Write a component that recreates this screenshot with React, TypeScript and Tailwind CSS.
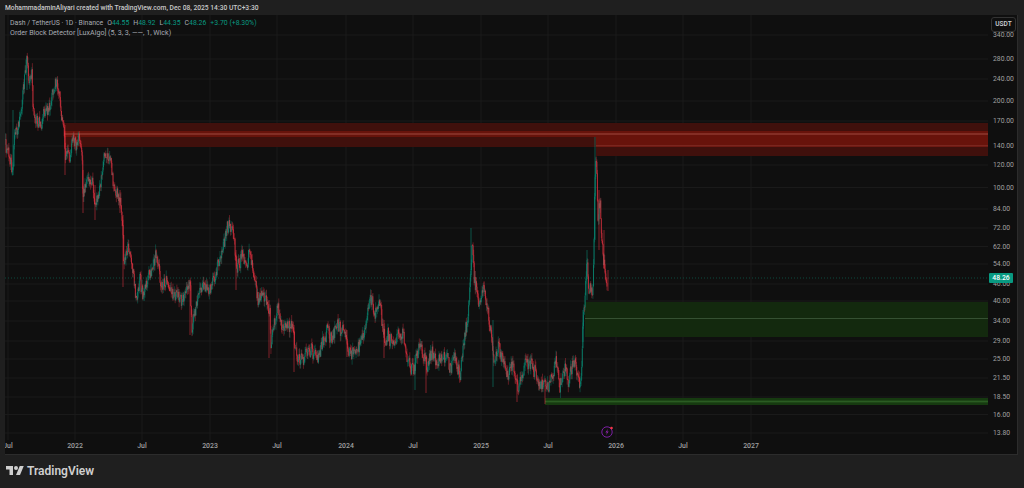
const UP = '#089981';
const DOWN = '#f23645';

// price path traced from the chart, in page pixels
const pricePath: [number, number][] = [
  [5, 140], [6, 147], [13, 170], [14, 140], [20, 117], [23, 93], [27, 63], [29, 83], [32, 73], [33, 107], [38, 130],
  [43, 113], [50, 103], [57, 80], [60, 107], [64, 127], [65, 160], [70, 157], [73, 137], [76, 147], [78, 137],
  [82, 157], [83, 197], [88, 173], [92, 183], [95, 203], [100, 187], [105, 157], [110, 157], [113, 183], [120, 200],
  [123, 233], [123.5, 260], [130, 250], [135, 277], [137, 303], [140, 277], [143, 297], [153, 267], [157, 257],
  [162, 287], [168, 277], [173, 300], [180, 297], [182, 303], [188, 290], [190, 282], [192, 327], [197, 300],
  [202, 277], [208, 295], [217, 270], [223, 247], [227, 223], [232, 227], [237, 263], [242, 253], [247, 258],
  [249, 250], [253, 273], [258, 300], [262, 290], [267, 293], [270, 310], [271, 342], [277, 308], [283, 323],
  [290, 332], [293, 327], [295, 353], [300, 357], [312, 347], [318, 360], [323, 343], [328, 330], [332, 337],
  [337, 320], [343, 327], [348, 350], [357, 350], [365, 337], [370, 298], [375, 317], [379, 302], [383, 330],
  [385, 347], [388, 333], [395, 347], [399, 333], [404, 337], [406, 353], [411, 367], [415, 363], [419, 343],
  [427, 367], [432, 353], [437, 367], [446, 353], [450, 367], [455, 363], [460, 377], [463, 350], [468, 317],
  [472, 243], [475, 283], [479, 300], [483, 290], [488, 313], [492, 333], [494, 357], [498, 345], [503, 353],
  [507, 373], [512, 363], [518, 387], [525, 367], [530, 362], [538, 377], [545, 393], [552, 380], [556, 360],
  [560, 383], [565, 367], [568, 377], [575, 360], [580, 385], [582, 363], [583, 323], [585, 305], [587, 263],
  [589, 293], [593, 287], [595, 173], [596, 150], [597, 177], [598, 223], [600, 203], [602, 243], [604, 257], [607, 283],
];

// long wicks that stand out from the noise: x, top, bottom, colour
const longWicks: [number, number, number, string][] = [
  [13, 110, 175, UP], [27, 58, 90, UP], [65, 125, 175, DOWN], [83, 170, 213, DOWN], [95, 185, 220, DOWN],
  [120, 190, 213, DOWN], [123, 215, 287, DOWN], [190, 280, 335, DOWN], [236, 250, 290, DOWN], [269, 300, 358, DOWN],
  [294, 325, 372, DOWN], [347, 330, 357, DOWN], [384, 320, 358, DOWN], [415, 355, 390, UP], [426, 355, 393, DOWN],
  [471, 228, 270, UP], [493, 320, 387, UP], [517, 375, 402, DOWN], [545, 385, 404, DOWN], [583, 310, 342, UP],
  [587, 250, 300, UP], [595, 137, 240, UP], [599, 190, 250, DOWN], [604, 230, 268, DOWN], [608, 270, 291, DOWN],
];

const priceAt = (x: number) => {
  for (let i = 1; i < pricePath.length; i++) {
    const [x0, y0] = pricePath[i - 1];
    const [x1, y1] = pricePath[i];
    if (x <= x1) return y0 + ((y1 - y0) * (x - x0)) / (x1 - x0);
  }
  return pricePath[pricePath.length - 1][1];
};

let seed = 41;
const rnd = () => {
  seed = (seed * 16807) % 2147483647;
  return seed / 2147483647;
};

const candles: { x: number; open: number; close: number; high: number; low: number }[] = [];
let lastClose = 140;
let drift = 0;
for (let x = 5.5; x <= 607; x += 0.56) {
  drift = drift * 0.8 + (rnd() - 0.5) * 6;
  const close = priceAt(x) + drift + (rnd() - 0.5) * 12;
  candles.push({
    x,
    open: lastClose,
    close,
    high: Math.min(lastClose, close) - rnd() * 6,
    low: Math.max(lastClose, close) + rnd() * 6,
  });
  lastClose = close;
}

const priceTicks: [string, number][] = [
  ['340.00', 35], ['280.00', 59], ['240.00', 79], ['200.00', 101], ['170.00', 121], ['140.00', 146], ['120.00', 165],
  ['100.00', 187.5], ['84.00', 209], ['72.00', 228], ['62.00', 246.5], ['54.00', 264], ['46.00', 284], ['40.00', 301],
  ['34.00', 321], ['29.00', 341], ['25.00', 359], ['21.50', 378], ['18.50', 397], ['16.00', 414.5], ['13.80', 433],
];

const timeTicks: [string, number][] = [
  ['Jul', 8], ['2022', 75], ['Jul', 142], ['2023', 210], ['Jul', 277], ['2024', 346], ['Jul', 413], ['2025', 481],
  ['Jul', 548], ['2026', 616], ['Jul', 683], ['2027', 751],
];

function ChartDrawing() {
  return (
    <svg className="absolute inset-0 w-full h-full" viewBox="5 15 983 425">
      {priceTicks.map(([label, y]) => (
        <line key={label} x1="5" x2="988" y1={y} y2={y} stroke="#1a1a1a" strokeWidth="1" />
      ))}
      {timeTicks.map(([label, x]) => (
        <line key={x} x1={x} x2={x} y1="15" y2="440" stroke="#1a1a1a" strokeWidth="1" />
      ))}

      <line x1="5" x2="988" y1="278" y2="278" stroke="#0c4a3e" strokeWidth="1" strokeDasharray="1 2" />

      {/* bearish order blocks */}
      <rect x="64" y="123" width="924" height="24" fill="#40100c" />
      <rect x="596" y="147" width="392" height="9" fill="#40100c" />
      <rect x="64" y="131" width="924" height="6" fill="#68130b" />
      <rect x="596" y="137" width="392" height="10" fill="#68130b" />
      <line x1="64" x2="988" y1="134" y2="134" stroke="#a04a40" strokeWidth="1.2" />
      <line x1="596" x2="988" y1="145.8" y2="145.8" stroke="#98423a" strokeWidth="0.6" />

      {/* bullish order blocks */}
      <rect x="585" y="302" width="403" height="35" fill="#13290e" />
      <line x1="585" x2="988" y1="318.5" y2="318.5" stroke="#3f5a3c" strokeWidth="0.8" />
      <rect x="545" y="398" width="443" height="7" fill="#163a10" />
      <rect x="545" y="400" width="443" height="3" fill="#1d4616" />
      <line x1="545" x2="988" y1="401.5" y2="401.5" stroke="#366b2e" strokeWidth="0.6" />

      {candles.map((c, i) => {
        const color = c.close < c.open ? UP : DOWN;
        return (
          <g key={i} stroke={color} strokeOpacity="0.9">
            <line x1={c.x} x2={c.x} y1={c.high} y2={c.low} strokeWidth="0.4" />
            <line x1={c.x} x2={c.x} y1={c.open} y2={c.close + 0.3} strokeWidth="0.7" />
          </g>
        );
      })}
      {longWicks.map(([x, top, bottom, color]) => (
        <line key={x} x1={x} x2={x} y1={top} y2={bottom} stroke={color} strokeWidth="0.6" strokeOpacity="0.85" />
      ))}

      {/* earnings marker */}
      <circle cx="607" cy="432" r="5.2" fill="#0f0f0f" stroke="#7b1fa2" strokeWidth="1" />
      <path d="M608 428.8 L605.4 432.4 H607 L606 435.2 L608.7 431.5 H607.1 Z" fill="#8e24aa" />
      <circle cx="611.5" cy="428" r="1.3" fill="#f23645" />
    </svg>
  );
}

function Legend() {
  const value = 'text-[#089981]';
  return (
    <div className="absolute left-[5px] top-[3px] text-[6.9px] leading-[10px] text-[#a8abb3]">
      <div className="flex gap-[4px]">
        <span>Dash / TetherUS · 1D · Binance</span>
        <span>O<span className={value}>44.55</span></span>
        <span>H<span className={value}>48.92</span></span>
        <span>L<span className={value}>44.35</span></span>
        <span>C<span className={value}>48.26</span></span>
        <span className={value}>+3.70 (+8.30%)</span>
      </div>
      <div className="text-[7.1px]">Order Block Detector [LuxAlgo] (5, 3, 3, ——, 1, Wick)</div>
    </div>
  );
}

function PriceAxis() {
  return (
    <div className="relative w-[29px] overflow-hidden text-[6.8px] text-[#a0a0a0]">
      {priceTicks.map(([label, y]) => (
        <span
          key={label}
          className="absolute left-[5px] leading-[10px]"
          style={{ top: y - 15 - 5 }}
        >
          {label}
        </span>
      ))}
      <span className="absolute left-[1px] top-[258px] w-[24px] h-[10px] rounded-[1px] bg-[#089981] text-center text-[6.8px] leading-[10px] font-medium text-white">
        48.26
      </span>
      <span className="absolute left-[3px] top-[2px] w-[25px] h-[15px] rounded-[3px] border border-[#333333] bg-[#0f0f0f] text-center text-[6.6px] leading-[13px] font-medium text-[#d1d4dc]">
        USDT
      </span>
    </div>
  );
}

export default function App() {
  return (
    <div className="flex flex-col w-[1024px] h-[488px] bg-[#1f1f1f] font-['Roboto',sans-serif]">
      <div className="h-[15px] pl-[5px] text-[6.7px] leading-[16px] font-medium text-[#c9c9c9] whitespace-nowrap">
        MohammadaminAliyari created with TradingView.com, Dec 08, 2025 14:30 UTC+3:30
      </div>

      <div className="flex h-[440px] ml-[5px] mr-[6px] bg-[#0f0f0f] border-r border-b border-[#2c2c2c]">
        <div className="flex flex-col w-[983px]">
          <div className="relative h-[425px]">
            <ChartDrawing />
            <Legend />
          </div>
          <div className="relative flex-1 overflow-hidden text-[6.9px] leading-[10px] font-medium text-[#a0a0a0]">
            {timeTicks.map(([label, x]) => (
              <span key={x} className="absolute top-[1px] -translate-x-1/2" style={{ left: x - 5 }}>
                {label}
              </span>
            ))}
          </div>
        </div>
        <PriceAxis />
      </div>

      <div className="flex flex-1 items-center gap-[3px] pl-[6px] pb-[2px]">
        <svg width="18" height="14" viewBox="0 0 36 28" fill="#cfcfcf">
          <path d="M14 22H7V11H0V4h14v18zM28 22h-8l7.5-18h8L28 22z" />
          <circle cx="20" cy="8" r="4" />
        </svg>
        <span className="text-[12px] leading-[16px] font-semibold text-[#cfcfcf]">TradingView</span>
      </div>
    </div>
  );
}
